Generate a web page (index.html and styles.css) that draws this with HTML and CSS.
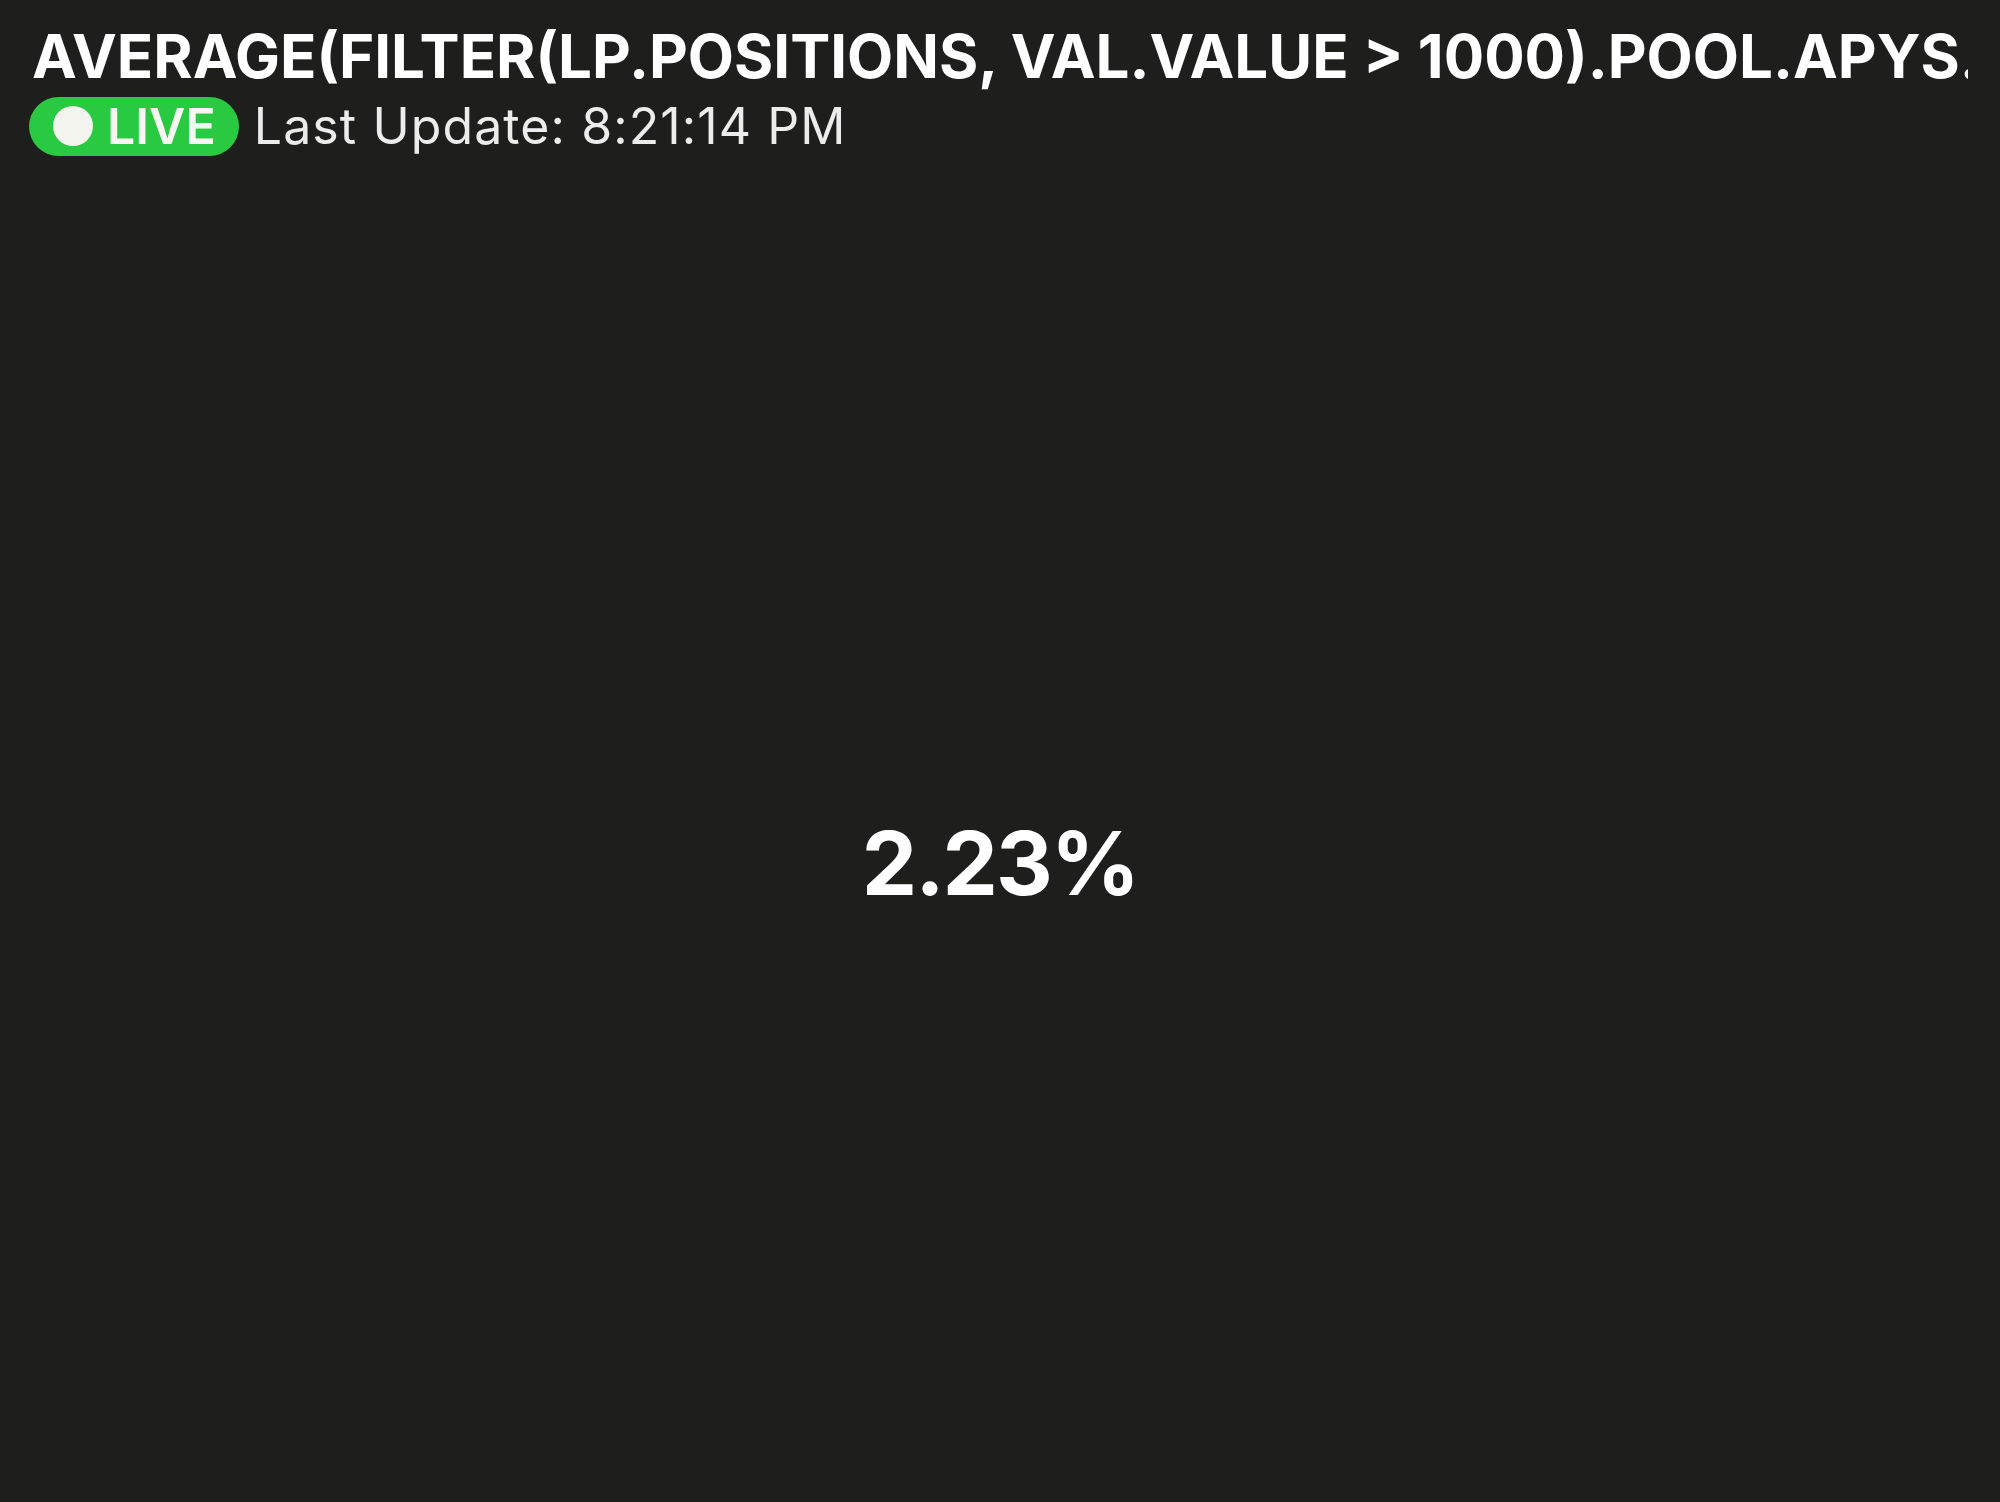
FILE: index.html
```html
<!DOCTYPE html>
<html lang="en">
  <head>
    <meta charset="UTF-8" />
    <meta name="viewport" content="width=device-width, initial-scale=1.0" />
    <title>Metric</title>
    <link rel="stylesheet" href="styles.css">
  </head>
  <body>
    <div class="widget">
      <header class="widget_head">
        <h1 class="query">AVERAGE(FILTER(LP.POSITIONS, VAL.VALUE &gt; 1000).POOL.APYS.MONTHLY)</h1>
        <div class="status">
          <span class="live"><span class="live_dot"></span>LIVE</span>
          <span class="updated">Last Update: 8:21:14 PM</span>
        </div>
      </header>
      <main class="value_area">
        <span class="value">2.23%</span>
      </main>
    </div>
  </body>
</html>
```

FILE: styles.css
```css
* {
  box-sizing: border-box;
  padding: 0;
  margin: 0;
  font-family: Inter, "Noto Sans", sans-serif;
}
body {
  height: 100vh;
  background-color: #1e1e1d;
  color: #fff;
  overflow: hidden;
}
.widget {
  height: 100%;
  display: flex;
  flex-direction: column;
}
.widget_head {
  padding: 20px 32px 20px 32px;
}
/* long query names just run off the right edge */
.query {
  font-size: 60px;
  font-weight: 700;
  line-height: 72px;
  white-space: nowrap;
  overflow: hidden;
}
.status {
  margin-top: 4px;
  display: flex;
  align-items: center;
  gap: 15px;
  margin-left: -3px;
}
.live {
  display: flex;
  align-items: center;
  gap: 14px;
  height: 59px;
  padding: 0 23px 0 24px;
  border-radius: 30px;
  background-color: #29c941;
  color: #f6f6f2;
  font-size: 50px;
  font-weight: 600;
}
.live_dot {
  width: 40px;
  height: 40px;
  border-radius: 50%;
  background-color: #f4f4ef;
}
.updated {
  font-size: 50px;
  font-weight: 400;
  letter-spacing: 1.1px;
  color: #ececec;
}
.value_area {
  flex: 1;
  display: flex;
  align-items: center;
  justify-content: center;
  padding-top: 48px;
}
.value {
  font-size: 88px;
  font-weight: 700;
  letter-spacing: -2px;
  line-height: 1;
}
```
